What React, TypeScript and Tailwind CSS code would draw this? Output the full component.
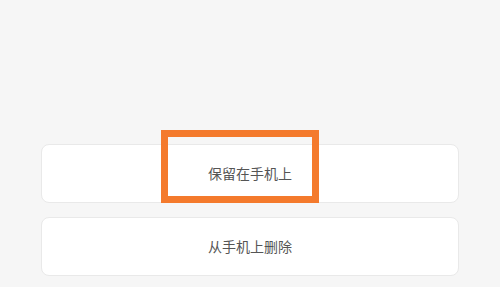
export default function App() {
  return (
    <div
      className="relative h-[287px] w-[500px] overflow-hidden bg-[#f6f6f6]"
      style={{ fontFamily: '"Noto Sans CJK SC", "Noto Sans", sans-serif' }}
    >
      <div className="flex flex-col gap-[14px] px-[41px] pt-[144px]">
        <button
          type="button"
          className="h-[59px] w-full rounded-[8px] border border-[#e9e9e9] bg-white text-[14px] text-[#555555]"
        >
          保留在手机上
        </button>
        <button
          type="button"
          className="h-[59px] w-full rounded-[8px] border border-[#e9e9e9] bg-white text-[14px] text-[#555555]"
        >
          从手机上删除
        </button>
      </div>

      {/* highlight marker drawn over the first button */}
      <div className="pointer-events-none absolute left-[161px] top-[130px] h-[73px] w-[158px] border-[7px] border-[#f47a2c]" />
    </div>
  )
}
